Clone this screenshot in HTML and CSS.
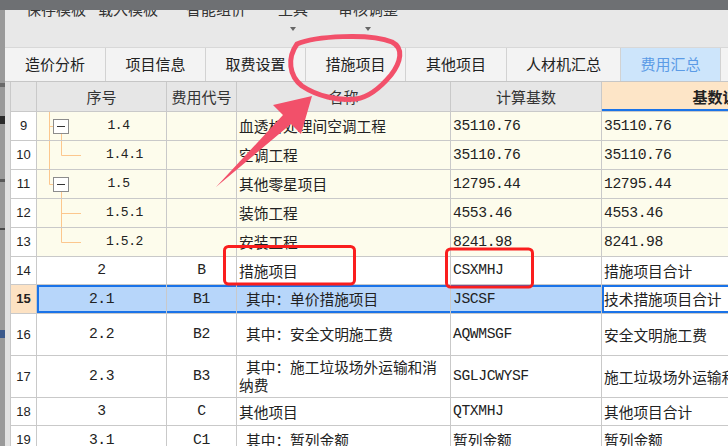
FILE: index.html
```html
<!DOCTYPE html>
<html lang="zh-CN">
<head>
    <meta charset="UTF-8">
    <title>费用汇总</title>
    <link rel="stylesheet" href="styles.css">
</head>
<body>
<div class="topbar"></div>
<div class="main">
    <div class="side">
        <i class="mk m1"></i>
        <i class="mk m2"></i>
        <i class="mk m3"></i>
        <i class="mk m4"></i>
        <i class="mk m5"></i>
    </div>
    <div class="window">
        <div class="toolbar">
            <div class="tool w72"><span>保存模板</span></div>
            <div class="tool w72"><span>载入模板</span></div>
            <div class="tool w72 g16"><span>智能组价</span></div>
            <div class="tool w60 g11"><span>工具</span><b class="drop"></b></div>
            <div class="tool w70 g10"><span>审核调整</span><b class="drop"></b></div>
        </div>
        <div class="tabs">
            <div class="tab t101">造价分析</div>
            <div class="tab">项目信息</div>
            <div class="tab">取费设置</div>
            <div class="tab">措施项目</div>
            <div class="tab t101">其他项目</div>
            <div class="tab t114">人材机汇总</div>
            <div class="tab on">费用汇总</div>
            <div class="tab">报表</div>
        </div>
        <div class="sheet">
            <table class="grid">
                <colgroup>
                    <col class="k0">
                    <col class="k1">
                    <col class="k2">
                    <col class="k3">
                    <col class="k4">
                    <col class="k5">
                </colgroup>
                <tr class="head">
                    <th></th>
                    <th>序号</th>
                    <th>费用代号</th>
                    <th>名称</th>
                    <th>计算基数</th>
                    <th class="hot">基数说明</th>
                </tr>
                <tr class="cream h29">
                    <td class="rn">9</td>
                    <td class="tree">
                        <div class="t">
                            <svg width="34" height="28" viewBox="0 0 34 28">
                                <path d="M12.5 -2V30M12.5 14.5H16M24.5 22V30" class="ln"/>
                                <rect x="16.5" y="7.5" width="15" height="14" class="bx"/>
                                <path d="M20 14.5H28" class="mn"/>
                            </svg>
                            <span class="num">1.4</span>
                        </div>
                    </td>
                    <td></td>
                    <td>血透析处理间空调工程</td>
                    <td class="num">35110.76</td>
                    <td class="num">35110.76</td>
                </tr>
                <tr class="cream h29">
                    <td class="rn">10</td>
                    <td class="tree">
                        <div class="t">
                            <svg width="46" height="28" viewBox="0 0 46 28">
                                <path d="M12.5 -2V30M24.5 -2V14.5H44" class="ln"/>
                            </svg>
                            <span class="num">1.4.1</span>
                        </div>
                    </td>
                    <td></td>
                    <td>空调工程</td>
                    <td class="num">35110.76</td>
                    <td class="num">35110.76</td>
                </tr>
                <tr class="cream h29">
                    <td class="rn">11</td>
                    <td class="tree">
                        <div class="t">
                            <svg width="34" height="28" viewBox="0 0 34 28">
                                <path d="M12.5 -2V14.5H16M24.5 22V30" class="ln"/>
                                <rect x="16.5" y="7.5" width="15" height="14" class="bx"/>
                                <path d="M20 14.5H28" class="mn"/>
                            </svg>
                            <span class="num">1.5</span>
                        </div>
                    </td>
                    <td></td>
                    <td>其他零星项目</td>
                    <td class="num">12795.44</td>
                    <td class="num">12795.44</td>
                </tr>
                <tr class="cream h28">
                    <td class="rn">12</td>
                    <td class="tree">
                        <div class="t">
                            <svg width="46" height="28" viewBox="0 0 46 28">
                                <path d="M24.5 -2V30M24.5 14.5H44" class="ln"/>
                            </svg>
                            <span class="num">1.5.1</span>
                        </div>
                    </td>
                    <td></td>
                    <td>装饰工程</td>
                    <td class="num">4553.46</td>
                    <td class="num">4553.46</td>
                </tr>
                <tr class="cream h29">
                    <td class="rn">13</td>
                    <td class="tree">
                        <div class="t">
                            <svg width="46" height="28" viewBox="0 0 46 28">
                                <path d="M24.5 -2V14.5H44" class="ln"/>
                            </svg>
                            <span class="num">1.5.2</span>
                        </div>
                    </td>
                    <td></td>
                    <td>安装工程</td>
                    <td class="num">8241.98</td>
                    <td class="num">8241.98</td>
                </tr>
                <tr class="h28">
                    <td class="rn">14</td>
                    <td class="c num">2</td>
                    <td class="c num">B</td>
                    <td>措施项目</td>
                    <td class="num">CSXMHJ</td>
                    <td>措施项目合计</td>
                </tr>
                <tr class="sel h29">
                    <td class="rn">15</td>
                    <td class="c num first">2.1</td>
                    <td class="c num">B1</td>
                    <td class="sub">其中：单价措施项目</td>
                    <td class="num">JSCSF</td>
                    <td class="cur">技术措施项目合计</td>
                </tr>
                <tr class="h42">
                    <td class="rn">16</td>
                    <td class="c num">2.2</td>
                    <td class="c num">B2</td>
                    <td class="sub">其中：安全文明施工费</td>
                    <td class="num">AQWMSGF</td>
                    <td>安全文明施工费</td>
                </tr>
                <tr class="h42">
                    <td class="rn">17</td>
                    <td class="c num">2.3</td>
                    <td class="c num">B3</td>
                    <td class="sub">其中：施工垃圾场外运输和消纳费</td>
                    <td class="num">SGLJCWYSF</td>
                    <td>施工垃圾场外运输和消纳费</td>
                </tr>
                <tr class="h28">
                    <td class="rn">18</td>
                    <td class="c num">3</td>
                    <td class="c num">C</td>
                    <td>其他项目</td>
                    <td class="num">QTXMHJ</td>
                    <td>其他项目合计</td>
                </tr>
                <tr class="h29">
                    <td class="rn">19</td>
                    <td class="c num">3.1</td>
                    <td class="c num">C1</td>
                    <td class="sub">其中：暂列金额</td>
                    <td>暂列金额</td>
                    <td>暂列金额</td>
                </tr>
            </table>
        </div>
    </div>
</div>
<!-- 标注：圈、箭头、红框 -->
<svg class="marks" width="728" height="446" viewBox="0 0 728 446">
    <path class="ring" d="M297 44C315 36 370 33 392 42C404 48 401 62 391 75C381 87 370 97 356 99C338 101 317 96 302 86C289 76 287 58 297 44Z"/>
    <polygon class="arrow" points="216,187 283,115 273,105 312,96 301,134 291,124"/>
    <rect class="box" x="224.5" y="246.5" width="130" height="37.5" rx="4"/>
    <rect class="box" x="446.5" y="249" width="86" height="38" rx="4"/>
</svg>
</body>
</html>
```

FILE: styles.css
```css
* {
    margin: 0;
    padding: 0;
    box-sizing: border-box;
}

body {
    width: 728px;
    height: 446px;
    overflow: hidden;
    position: relative;
    background: #6e7073;
    font-family: "Noto Sans CJK SC", sans-serif;
    color: #222;
}

.topbar {
    height: 10px;
    background: #6e7073;
}

.main {
    display: flex;
    height: 436px;
}

/* 左侧露出的后面窗口 */
.side {
    width: 5px;
    background: #9a9a9a;
    display: flex;
    flex-direction: column;
}

.side .mk {
    display: block;
    width: 5px;
}

.side .m1 {
    height: 4px;
    margin-top: 73px;
    background: #6a6a6a;
}

.side .m2 {
    height: 8px;
    margin-top: 29px;
    background: #2a2a2a;
}

.side .m3 {
    height: 3px;
    margin-top: 55px;
    background: #5a5a5a;
}

.side .m4 {
    height: 2px;
    margin-top: 46px;
    background: #4a4a4a;
}

.side .m5 {
    height: 8px;
    margin-top: 100px;
    background: #3c5a8c;
}

.window {
    flex: 1;
    display: flex;
    flex-direction: column;
    background: #e8e8e8;
    overflow: hidden;
}

.toolbar {
    height: 37px;
    display: flex;
    padding-left: 15px;
    overflow: hidden;
}

.tool {
    display: flex;
    flex-direction: column;
    align-items: center;
    font-size: 15px;
    line-height: 15px;
    color: #333;
}

.tool span {
    margin-top: -9px;
    white-space: nowrap;
}

.tool .drop {
    margin-top: 11px;
    width: 0;
    height: 0;
    border-left: 3.5px solid transparent;
    border-right: 3.5px solid transparent;
    border-top: 4px solid #666;
}

.w72 { width: 72px; }
.w60 { width: 60px; }
.w70 { width: 70px; }
.g16 { margin-left: 16px; }
.g11 { margin-left: 11px; }
.g10 { margin-left: 10px; }

.tabs {
    height: 35px;
    display: flex;
    background: #f3f3f3;
    border-top: 1px solid #d8d8d8;
    border-bottom: 1px solid #c6c6c6;
}

.tab {
    flex: none;
    width: 100px;
    border-right: 1px solid #d2d2d2;
    text-align: center;
    font-size: 15px;
    line-height: 18px;
    padding-top: 7px;
    color: #222;
    white-space: nowrap;
}

.tab.t101 { width: 101px; }
.tab.t114 { width: 114px; }

.tab.on {
    background: #cde5fb;
    color: #5b9be6;
}

.sheet {
    flex: 1;
    padding-left: 5px;
    background: #e2e2e2;
    overflow: hidden;
}

.grid {
    border-collapse: collapse;
    table-layout: fixed;
    width: 833px;
    background: #fff;
}

.k0 { width: 26px; }
.k1 { width: 130px; }
.k2 { width: 70px; }
.k3 { width: 214px; }
.k4 { width: 151px; }
.k5 { width: 242px; }

.grid th,
.grid td {
    border: 1px solid #c9c9c9;
    padding: 0 2px;
    white-space: nowrap;
    overflow: hidden;
    vertical-align: middle;
    text-align: left;
    font-size: 14.7px;
    font-weight: normal;
}

.grid tr.head { height: 29px; }
.grid tr.h29 { height: 29px; }
.grid tr.h28 { height: 28px; }
.grid tr.h42 { height: 42px; }

.grid th {
    background: #e6e6e6;
    text-align: center;
    font-size: 15px;
    color: #333;
    border-top: none;
}

.grid th.hot {
    background: #fde5c7;
    font-weight: bold;
    color: #222;
    box-shadow: inset 0 -2px 0 #1a73e8;
}

.grid td.rn {
    padding: 0;
    text-align: center;
    font-family: "Liberation Sans", sans-serif;
    font-size: 13px;
    color: #222;
    background: #fff;
}

.num {
    font-family: "Liberation Mono", monospace;
    font-size: 13px;
    letter-spacing: -0.4px;
}

.grid td.c {
    text-align: center;
}

.grid tr.cream td {
    background: #fdfcec;
}

.grid tr.cream td.rn {
    background: #fff;
}

.grid td.tree {
    padding: 0;
}

.t {
    display: flex;
    align-items: center;
}

.t svg {
    display: block;
    flex: none;
    overflow: visible;
}

.t span {
    flex: 1;
    text-align: center;
}

.ln {
    fill: none;
    stroke: #fcc78e;
    stroke-width: 1;
}

.bx {
    fill: #fff;
    stroke: #8c8c8c;
    stroke-width: 1;
}

.mn {
    stroke: #333;
    stroke-width: 1;
}

.grid td.sub {
    text-indent: 7px;
    white-space: normal;
    line-height: 18px;
}

/* 当前选中行 */
.grid tr.sel td {
    background: #b7d6fa;
    box-shadow: inset 0 2px 0 #1a73e8, inset 0 -2px 0 #1a73e8;
}

.grid tr.sel td.first {
    box-shadow: inset 2px 0 0 #1a73e8, inset 0 2px 0 #1a73e8, inset 0 -2px 0 #1a73e8;
}

.grid tr.sel td.rn {
    background: #fde2c3;
    font-weight: bold;
    box-shadow: none;
}

.grid tr.sel td.cur {
    background: #fff;
    box-shadow: inset 0 0 0 2px #1a73e8;
}

.marks {
    position: absolute;
    left: 0;
    top: 0;
    pointer-events: none;
}

.ring {
    fill: none;
    stroke: #f2506a;
    stroke-width: 5;
    stroke-linecap: round;
}

.arrow {
    fill: #f2506a;
}

.box {
    fill: none;
    stroke: #fa1e1e;
    stroke-width: 3;
}
```
